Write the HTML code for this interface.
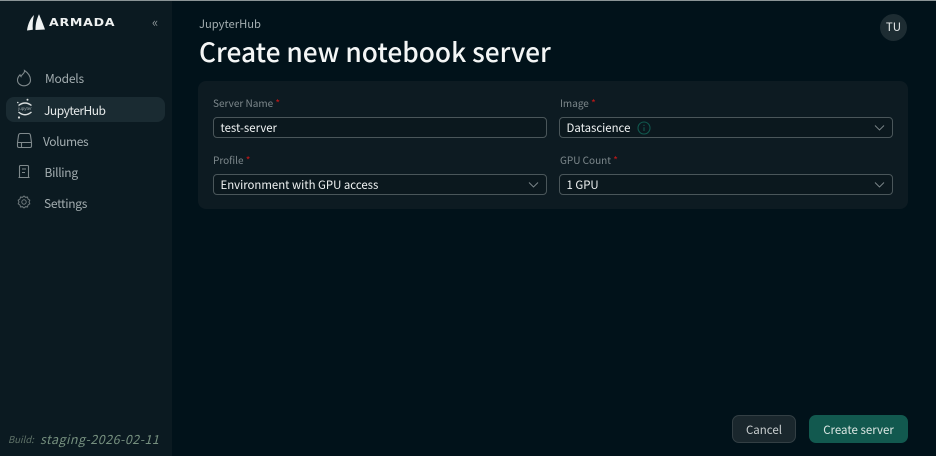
<!DOCTYPE html>
<html><head><meta charset="utf-8"><style>
*{box-sizing:border-box}
html,body{margin:0;padding:0;width:936px;height:456px;overflow:hidden;background:#01121a}
body{position:relative;font-family:"Noto Sans CJK SC","Liberation Sans",sans-serif}
.a{position:absolute;white-space:nowrap}
.nav{font-size:12px;line-height:16px;color:#a3adb0}
.lab{font-size:10px;line-height:14px;color:#7d888c}
.lab b{color:#c01818;font-weight:400}
.inp{position:absolute;height:21px;width:334px;border:1px solid #4a565a;border-radius:4px;background:#0b181e;color:#f0f3f3;font-size:11.4px;line-height:21px;padding-left:6.5px}
.inp svg{position:absolute;right:7px;top:6px}
</style></head><body>
<div class="a" style="left:0;top:0;width:172px;height:456px;background:#0b1a21"></div>
<div class="a" style="left:0;top:0;width:936px;height:1px;background:#8b9496"></div>

<svg class="a" style="left:26px;top:14px" width="20" height="18" viewBox="0 0 20 18"><path d="M8 1C4.800 4 2 9 1 16.500L6.800 15.800C6.400 10.500 6.900 6 8 1Z" fill="#f0f3f3"/><path d="M13 0.300C10.500 5.500 9.300 11 9.500 16L19 15.500C17 10 15 5 13 0.300Z" fill="#f0f3f3"/></svg>
<div class="a" style="left:49px;top:15px;font-family:'DejaVu Sans',sans-serif;font-weight:700;font-size:10.500px;line-height:16px;letter-spacing:.6px;color:#eef1f1;transform-origin:left;transform:scaleX(1.200)">ARMADA</div>
<div class="a" style="left:152px;top:14px;font-size:13px;line-height:16px;color:#8d9699">«</div>

<svg class="a" style="left:16px;top:69px" width="16" height="18" viewBox="0 0 16 18" fill="none" stroke="#7f898c" stroke-width="1.100"><path d="M8.500 1.500C9 4.500 5.500 5.500 5 7.500C4.500 6.800 4.200 6.300 4 5.800C2.300 7.500 1.500 9 1.500 11C1.500 14.500 4.500 16.800 8 16.800C11.500 16.800 14.500 14.500 14.500 11C14.500 7 11.500 3.500 8.500 1.500Z"/></svg>
<div class="a nav" style="left:45px;top:71px;letter-spacing:-.2px">Models</div>

<div class="a" style="left:6px;top:97px;width:159px;height:25px;border-radius:8px;background:#1a2b32"></div>
<svg class="a" style="left:16px;top:98px" width="18" height="22" viewBox="0 0 18 22" fill="none"><path d="M2.500 7.500Q9 2.500 15.500 7.500" stroke="#d8dddd" stroke-width="1.400"/><path d="M2.500 14Q9 19.500 15.500 14" stroke="#d8dddd" stroke-width="1.400"/><circle cx="11.500" cy="1.800" r="1" fill="#d8dddd"/><circle cx="1.800" cy="4.500" r=".8" fill="#d8dddd"/><circle cx="3" cy="19.500" r="1.100" fill="#d8dddd"/><text x="9" y="12" font-size="4.500" text-anchor="middle" fill="#9aa4a7" font-family="Liberation Sans">jupyter</text></svg>
<div class="a nav" style="left:44px;top:103px;color:#e6eaea;letter-spacing:-.5px">JupyterHub</div>

<svg class="a" style="left:16px;top:132px" width="17" height="17" viewBox="0 0 17 17" fill="none" stroke="#7f898c" stroke-width="1.100"><path d="M1.500 10.500L2.500 3.500C2.700 2 3.500 1.500 4.500 1.500H12.500C13.500 1.500 14.300 2 14.500 3.500L15.500 10.500V14C15.500 15 15 15.500 14 15.500H3C2 15.500 1.500 15 1.500 14Z"/><path d="M1.500 10.500H15.500M5.500 10.500V15.500"/></svg>
<div class="a nav" style="left:43px;top:134px;letter-spacing:-.4px">Volumes</div>

<svg class="a" style="left:17px;top:164px" width="14" height="16" viewBox="0 0 14 16" fill="none" stroke="#7f898c" stroke-width="1.100"><path d="M2.500 13V2.500C2.500 1.800 3 1.500 3.500 1.500H10.500C11 1.500 11.500 1.800 11.500 2.500V13M1.500 13.500H12.500"/><path d="M5 5H9M5 8.500H8"/></svg>
<div class="a nav" style="left:44.500px;top:165px;letter-spacing:-.3px">Billing</div>

<svg class="a" style="left:17px;top:195px" width="14" height="14" viewBox="0 0 14 14" fill="none" stroke="#6f797c" stroke-width="1"><path d="M7 1L8.500 2.300L10.500 2.100L11 4L12.800 5.200L12 7L12.800 8.800L11 10L10.500 11.900L8.500 11.700L7 13L5.500 11.700L3.500 11.900L3 10L1.200 8.800L2 7L1.200 5.200L3 4L3.500 2.100L5.500 2.300Z"/><circle cx="7" cy="7" r="2.200"/></svg>
<div class="a nav" style="left:44px;top:196px;letter-spacing:-.3px">Settings</div>

<div class="a" style="left:8px;top:433px;font-size:9.500px;line-height:13px;font-style:italic;color:#5f7268">Build:</div>
<div class="a" style="left:40px;top:430px;font-size:12.500px;line-height:17px;font-style:italic;letter-spacing:.48px;color:#76907f">staging-2026-02-11</div>

<div class="a" style="left:199px;top:16px;font-size:11.200px;line-height:16px;color:#a3adb0">JupyterHub</div>
<div class="a" style="left:199px;top:34px;font-size:26.300px;line-height:34px;font-weight:500;color:#f4f6f6">Create new notebook server</div>

<div class="a" style="left:880px;top:14px;width:27px;height:27px;border-radius:50%;background:#1d2c32;color:#e6eaea;font-size:11.500px;line-height:27px;text-align:center">TU</div>

<div class="a" style="left:198px;top:81px;width:710px;height:128px;border-radius:8px;background:#0d1b22"></div>

<div class="a lab" style="left:213px;top:96px">Server Name <b>*</b></div>
<div class="inp" style="left:213px;top:117px">test-server</div>
<div class="a lab" style="left:213px;top:153px">Profile <b>*</b></div>
<div class="inp" style="left:213px;top:174px">Environment with GPU access<svg width="11" height="8" viewBox="0 0 11 8" fill="none" stroke="#7f898c" stroke-width=".9"><path d="M1 1.500L5.500 6L10 1.500"/></svg></div>

<div class="a lab" style="left:560px;top:96px">Image <b>*</b></div>
<div class="inp" style="left:559px;top:117px">Datascience<svg width="11" height="8" viewBox="0 0 11 8" fill="none" stroke="#7f898c" stroke-width=".9"><path d="M1 1.500L5.500 6L10 1.500"/></svg></div>
<svg class="a" style="left:637px;top:121px" width="14" height="14" viewBox="0 0 14 14" fill="none" stroke="#11594f" stroke-width="1.100"><circle cx="7" cy="7" r="6"/><path d="M7 6.200V10M7 3.800V5"/></svg>
<div class="a lab" style="left:560px;top:153px">GPU Count <b>*</b></div>
<div class="inp" style="left:559px;top:174px">1 GPU<svg width="11" height="8" viewBox="0 0 11 8" fill="none" stroke="#7f898c" stroke-width=".9"><path d="M1 1.500L5.500 6L10 1.500"/></svg></div>

<div class="a" style="left:732px;top:415px;width:64px;height:28px;border:1px solid #333f44;border-radius:7px;background:#1a272d;color:#c8cecf;font-size:11.500px;line-height:29px;text-align:center">Cancel</div>
<div class="a" style="left:809px;top:415px;width:99px;height:28px;border-radius:7px;background:#12594f;color:#dbe6e3;font-size:11.500px;line-height:31px;text-align:center">Create server</div>
</body></html>
